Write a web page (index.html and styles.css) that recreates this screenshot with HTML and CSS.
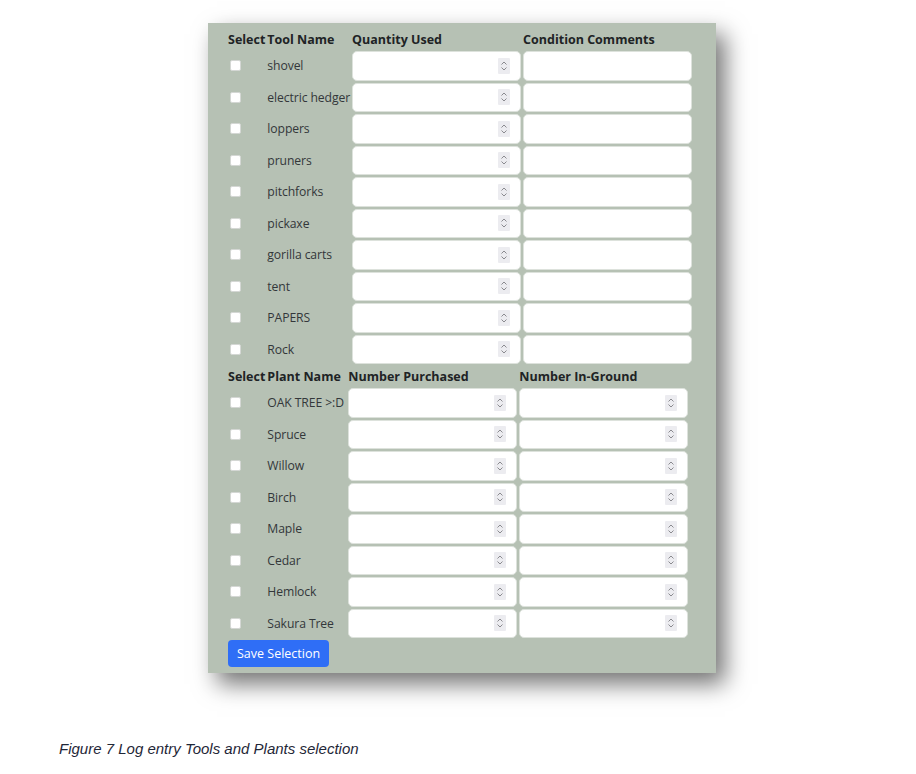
FILE: index.html
```html
<!DOCTYPE html>
<html>
<head>
<meta charset="utf-8">
<link rel="stylesheet" href="styles.css">
</head>
<body>
<div class="page">
  <div class="panel">
    <table class="grid">
      <thead>
        <tr><th>Select</th><th>Tool Name</th><th>Quantity Used</th><th>Condition Comments</th></tr>
      </thead>
      <tbody>
        <tr><td><input type="checkbox" class="check"></td><td class="name">shovel</td><td><div class="field"><span class="spin"><svg viewBox="0 0 12 16" width="12" height="16"><path d="M3.5 6.5 6 4l2.5 2.5M3.5 9.5 6 12l2.5-2.5" fill="none" stroke="#8a8a8f" stroke-width="1"/></svg></span></div></td><td><div class="field"></div></td></tr>
        <tr><td><input type="checkbox" class="check"></td><td class="name">electric hedger</td><td><div class="field"><span class="spin"><svg viewBox="0 0 12 16" width="12" height="16"><path d="M3.5 6.5 6 4l2.5 2.5M3.5 9.5 6 12l2.5-2.5" fill="none" stroke="#8a8a8f" stroke-width="1"/></svg></span></div></td><td><div class="field"></div></td></tr>
        <tr><td><input type="checkbox" class="check"></td><td class="name">loppers</td><td><div class="field"><span class="spin"><svg viewBox="0 0 12 16" width="12" height="16"><path d="M3.5 6.5 6 4l2.5 2.5M3.5 9.5 6 12l2.5-2.5" fill="none" stroke="#8a8a8f" stroke-width="1"/></svg></span></div></td><td><div class="field"></div></td></tr>
        <tr><td><input type="checkbox" class="check"></td><td class="name">pruners</td><td><div class="field"><span class="spin"><svg viewBox="0 0 12 16" width="12" height="16"><path d="M3.5 6.5 6 4l2.5 2.5M3.5 9.5 6 12l2.5-2.5" fill="none" stroke="#8a8a8f" stroke-width="1"/></svg></span></div></td><td><div class="field"></div></td></tr>
        <tr><td><input type="checkbox" class="check"></td><td class="name">pitchforks</td><td><div class="field"><span class="spin"><svg viewBox="0 0 12 16" width="12" height="16"><path d="M3.5 6.5 6 4l2.5 2.5M3.5 9.5 6 12l2.5-2.5" fill="none" stroke="#8a8a8f" stroke-width="1"/></svg></span></div></td><td><div class="field"></div></td></tr>
        <tr><td><input type="checkbox" class="check"></td><td class="name">pickaxe</td><td><div class="field"><span class="spin"><svg viewBox="0 0 12 16" width="12" height="16"><path d="M3.5 6.5 6 4l2.5 2.5M3.5 9.5 6 12l2.5-2.5" fill="none" stroke="#8a8a8f" stroke-width="1"/></svg></span></div></td><td><div class="field"></div></td></tr>
        <tr><td><input type="checkbox" class="check"></td><td class="name">gorilla carts</td><td><div class="field"><span class="spin"><svg viewBox="0 0 12 16" width="12" height="16"><path d="M3.5 6.5 6 4l2.5 2.5M3.5 9.5 6 12l2.5-2.5" fill="none" stroke="#8a8a8f" stroke-width="1"/></svg></span></div></td><td><div class="field"></div></td></tr>
        <tr><td><input type="checkbox" class="check"></td><td class="name">tent</td><td><div class="field"><span class="spin"><svg viewBox="0 0 12 16" width="12" height="16"><path d="M3.5 6.5 6 4l2.5 2.5M3.5 9.5 6 12l2.5-2.5" fill="none" stroke="#8a8a8f" stroke-width="1"/></svg></span></div></td><td><div class="field"></div></td></tr>
        <tr><td><input type="checkbox" class="check"></td><td class="name">PAPERS</td><td><div class="field"><span class="spin"><svg viewBox="0 0 12 16" width="12" height="16"><path d="M3.5 6.5 6 4l2.5 2.5M3.5 9.5 6 12l2.5-2.5" fill="none" stroke="#8a8a8f" stroke-width="1"/></svg></span></div></td><td><div class="field"></div></td></tr>
        <tr><td><input type="checkbox" class="check"></td><td class="name">Rock</td><td><div class="field"><span class="spin"><svg viewBox="0 0 12 16" width="12" height="16"><path d="M3.5 6.5 6 4l2.5 2.5M3.5 9.5 6 12l2.5-2.5" fill="none" stroke="#8a8a8f" stroke-width="1"/></svg></span></div></td><td><div class="field"></div></td></tr>
      </tbody>
    </table>
    <table class="grid plants">
      <thead>
        <tr><th>Select</th><th>Plant Name</th><th>Number Purchased</th><th>Number In-Ground</th></tr>
      </thead>
      <tbody>
        <tr><td><input type="checkbox" class="check"></td><td class="name">OAK TREE &gt;:D</td><td><div class="field"><span class="spin"><svg viewBox="0 0 12 16" width="12" height="16"><path d="M3.5 6.5 6 4l2.5 2.5M3.5 9.5 6 12l2.5-2.5" fill="none" stroke="#8a8a8f" stroke-width="1"/></svg></span></div></td><td><div class="field"><span class="spin"><svg viewBox="0 0 12 16" width="12" height="16"><path d="M3.5 6.5 6 4l2.5 2.5M3.5 9.5 6 12l2.5-2.5" fill="none" stroke="#8a8a8f" stroke-width="1"/></svg></span></div></td></tr>
        <tr><td><input type="checkbox" class="check"></td><td class="name">Spruce</td><td><div class="field"><span class="spin"><svg viewBox="0 0 12 16" width="12" height="16"><path d="M3.5 6.5 6 4l2.5 2.5M3.5 9.5 6 12l2.5-2.5" fill="none" stroke="#8a8a8f" stroke-width="1"/></svg></span></div></td><td><div class="field"><span class="spin"><svg viewBox="0 0 12 16" width="12" height="16"><path d="M3.5 6.5 6 4l2.5 2.5M3.5 9.5 6 12l2.5-2.5" fill="none" stroke="#8a8a8f" stroke-width="1"/></svg></span></div></td></tr>
        <tr><td><input type="checkbox" class="check"></td><td class="name">Willow</td><td><div class="field"><span class="spin"><svg viewBox="0 0 12 16" width="12" height="16"><path d="M3.5 6.5 6 4l2.5 2.5M3.5 9.5 6 12l2.5-2.5" fill="none" stroke="#8a8a8f" stroke-width="1"/></svg></span></div></td><td><div class="field"><span class="spin"><svg viewBox="0 0 12 16" width="12" height="16"><path d="M3.5 6.5 6 4l2.5 2.5M3.5 9.5 6 12l2.5-2.5" fill="none" stroke="#8a8a8f" stroke-width="1"/></svg></span></div></td></tr>
        <tr><td><input type="checkbox" class="check"></td><td class="name">Birch</td><td><div class="field"><span class="spin"><svg viewBox="0 0 12 16" width="12" height="16"><path d="M3.5 6.5 6 4l2.5 2.5M3.5 9.5 6 12l2.5-2.5" fill="none" stroke="#8a8a8f" stroke-width="1"/></svg></span></div></td><td><div class="field"><span class="spin"><svg viewBox="0 0 12 16" width="12" height="16"><path d="M3.5 6.5 6 4l2.5 2.5M3.5 9.5 6 12l2.5-2.5" fill="none" stroke="#8a8a8f" stroke-width="1"/></svg></span></div></td></tr>
        <tr><td><input type="checkbox" class="check"></td><td class="name">Maple</td><td><div class="field"><span class="spin"><svg viewBox="0 0 12 16" width="12" height="16"><path d="M3.5 6.5 6 4l2.5 2.5M3.5 9.5 6 12l2.5-2.5" fill="none" stroke="#8a8a8f" stroke-width="1"/></svg></span></div></td><td><div class="field"><span class="spin"><svg viewBox="0 0 12 16" width="12" height="16"><path d="M3.5 6.5 6 4l2.5 2.5M3.5 9.5 6 12l2.5-2.5" fill="none" stroke="#8a8a8f" stroke-width="1"/></svg></span></div></td></tr>
        <tr><td><input type="checkbox" class="check"></td><td class="name">Cedar</td><td><div class="field"><span class="spin"><svg viewBox="0 0 12 16" width="12" height="16"><path d="M3.5 6.5 6 4l2.5 2.5M3.5 9.5 6 12l2.5-2.5" fill="none" stroke="#8a8a8f" stroke-width="1"/></svg></span></div></td><td><div class="field"><span class="spin"><svg viewBox="0 0 12 16" width="12" height="16"><path d="M3.5 6.5 6 4l2.5 2.5M3.5 9.5 6 12l2.5-2.5" fill="none" stroke="#8a8a8f" stroke-width="1"/></svg></span></div></td></tr>
        <tr><td><input type="checkbox" class="check"></td><td class="name">Hemlock</td><td><div class="field"><span class="spin"><svg viewBox="0 0 12 16" width="12" height="16"><path d="M3.5 6.5 6 4l2.5 2.5M3.5 9.5 6 12l2.5-2.5" fill="none" stroke="#8a8a8f" stroke-width="1"/></svg></span></div></td><td><div class="field"><span class="spin"><svg viewBox="0 0 12 16" width="12" height="16"><path d="M3.5 6.5 6 4l2.5 2.5M3.5 9.5 6 12l2.5-2.5" fill="none" stroke="#8a8a8f" stroke-width="1"/></svg></span></div></td></tr>
        <tr><td><input type="checkbox" class="check"></td><td class="name">Sakura Tree</td><td><div class="field"><span class="spin"><svg viewBox="0 0 12 16" width="12" height="16"><path d="M3.5 6.5 6 4l2.5 2.5M3.5 9.5 6 12l2.5-2.5" fill="none" stroke="#8a8a8f" stroke-width="1"/></svg></span></div></td><td><div class="field"><span class="spin"><svg viewBox="0 0 12 16" width="12" height="16"><path d="M3.5 6.5 6 4l2.5 2.5M3.5 9.5 6 12l2.5-2.5" fill="none" stroke="#8a8a8f" stroke-width="1"/></svg></span></div></td></tr>
      </tbody>
    </table>
    <button class="save">Save Selection</button>
  </div>
  <p class="caption">Figure 7 Log entry Tools and Plants selection</p>
</div>
</body>
</html>
```

FILE: styles.css
```css
html, body {
  margin: 0;
  padding: 0;
  background: #ffffff;
}

.page {
  padding: 23px 0 0 208px;
}

.panel {
  width: 508px;
  height: 650px;
  box-sizing: border-box;
  padding: 6px 18px 6px 18px;
  background: #b6c1b4;
  box-shadow: 9px 11px 22px rgba(0, 0, 0, 0.55);
  font-family: "Open Sans", "Noto Sans", sans-serif;
  font-size: 12.5px;
  color: #2b2f31;
  display: flex;
  flex-direction: column;
  align-items: flex-start;
}

.grid {
  border-collapse: separate;
  border-spacing: 2px;
}

.grid th {
  text-align: left;
  font-weight: 700;
  color: #202325;
  padding: 0;
  height: 18px;
  line-height: 18px;
  white-space: nowrap;
}

.grid td {
  padding: 0;
  vertical-align: middle;
}

.name {
  white-space: nowrap;
  color: #33373a;
  font-size: 12.2px;
  letter-spacing: -0.1px;
}

.plants .name {
  min-width: 79px;
}

.check {
  appearance: none;
  -webkit-appearance: none;
  display: block;
  width: 11px;
  height: 11px;
  margin: 0 0 0 2px;
  background: #ffffff;
  border: 1px solid #d4d7d4;
  border-radius: 2px;
  box-sizing: border-box;
}

.field {
  width: 169px;
  height: 29.5px;
  box-sizing: border-box;
  background: #ffffff;
  border: 1px solid #dde2dc;
  border-radius: 5px;
  display: flex;
  align-items: center;
  justify-content: flex-end;
  padding-right: 10px;
}

.spin {
  display: block;
  width: 12px;
  height: 16px;
  background: #ececf0;
  border-radius: 1px;
}

.spin svg {
  display: block;
}

.save {
  margin: 0 0 0 2px;
  padding: 0 9px;
  height: 28px;
  border: none;
  border-radius: 4px;
  background: #2f6ef6;
  color: #ffffff;
  font-family: "Open Sans", "Noto Sans", sans-serif;
  font-size: 12.5px;
}

.caption {
  margin: 67px 0 0 -149px;
  font-family: "Liberation Sans", sans-serif;
  font-style: italic;
  font-size: 15px;
  color: #1f2738;
}
```
